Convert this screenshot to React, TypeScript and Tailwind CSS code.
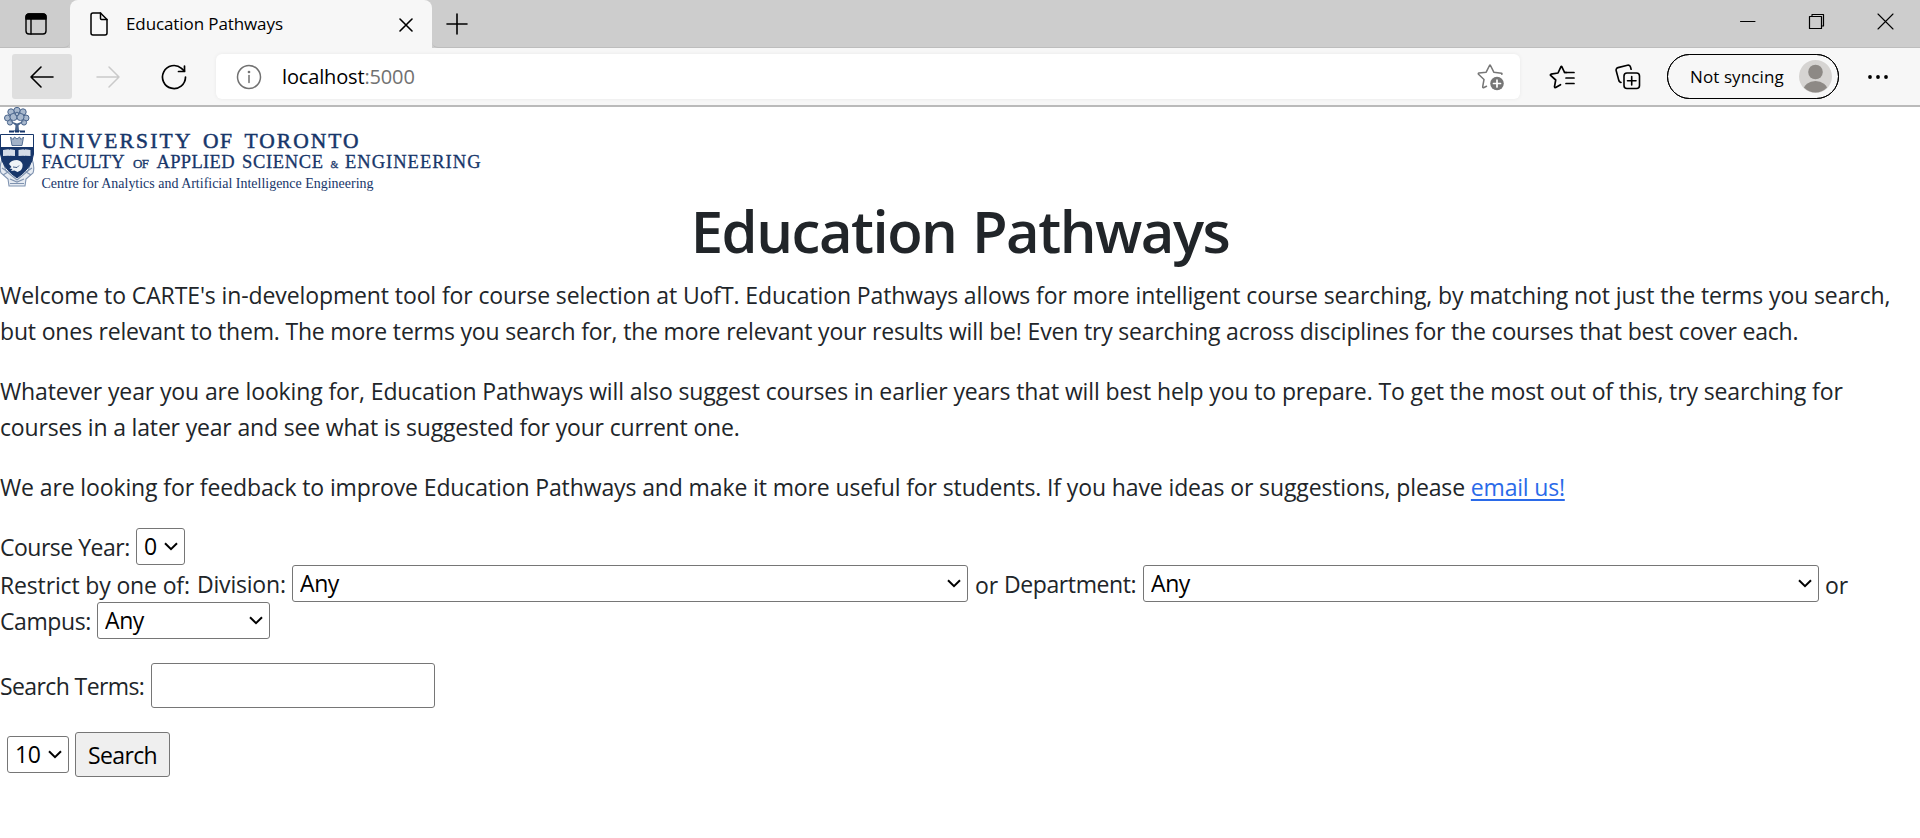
import React from "react";

const stroke = { fill: "none", stroke: "currentColor", strokeLinecap: "round", strokeLinejoin: "round" } as const;

function TabBar() {
  return (
    <div className="flex h-12 bg-[#cdcdcd] text-black">
      <div className="flex h-12 w-[70px] items-center rounded-br-md border-b border-[#bdbdbd] pl-[25px]">
        <svg width="22" height="22" viewBox="0 0 22 22" {...stroke} strokeWidth="1.4">
          <rect x="1" y="1" width="20" height="20" rx="3" />
          <path d="M1 6V4a3 3 0 0 1 3-3h14a3 3 0 0 1 3 3v2z" fill="currentColor" />
          <path d="M6 6v15" />
        </svg>
      </div>
      <div className="flex w-[362px] items-center rounded-t-lg bg-[#f7f7f7] pl-5">
        <svg width="18" height="24" viewBox="0 0 18 24" {...stroke} strokeWidth="1.5">
          <path d="M3 1h7.500L17 7.500V21a2 2 0 0 1-2 2H3a2 2 0 0 1-2-2V3a2 2 0 0 1 2-2z" />
          <path d="M10.500 1v5.500a1 1 0 0 0 1 1H17" />
        </svg>
        <span className="ml-[18px] w-[273px] text-[17px] leading-[48px] tracking-[-0.1px]">Education Pathways</span>
        <svg className="mt-0.5" width="14" height="14" viewBox="0 0 14 14" {...stroke} strokeWidth="1.6">
          <path d="M1 1l12 12M13 1L1 13" />
        </svg>
      </div>
      <div className="flex flex-1 items-center rounded-bl-md border-b border-[#bdbdbd] pr-[26px]">
        <svg className="ml-[14px]" width="22" height="22" viewBox="0 0 22 22" {...stroke} strokeWidth="1.6">
          <path d="M11 1v20M1 11h20" />
        </svg>
        <div className="mb-1 ml-auto flex items-center gap-[52px]">
          <svg width="17" height="17" viewBox="0 0 17 17" {...stroke} strokeWidth="1">
            <path d="M1.500 8.500h14.500" />
          </svg>
          <svg width="17" height="17" viewBox="0 0 17 17" {...stroke} strokeWidth="1.200">
            <path d="M1.500 3.500h12v12h-12zM4 3.500v-2h11.500V13h-2" />
          </svg>
          <svg width="17" height="17" viewBox="0 0 17 17" {...stroke} strokeWidth="1.100">
            <path d="M1 1l15 15M16 1L1 16" />
          </svg>
        </div>
      </div>
    </div>
  );
}

function Toolbar() {
  return (
    <div className="flex h-[59px] items-start border-b-2 border-[#bababa] bg-[#f7f7f7] pl-3 pt-1.5 text-black">
      <div className="flex h-[45px] w-[60px] items-center justify-center rounded-[3px] bg-[#dfdfdf]">
        <svg width="26" height="24" viewBox="0 0 26 24" {...stroke} strokeWidth="1.600">
          <path d="M12 2L2 12l10 10M2 12h22" />
        </svg>
      </div>
      <div className="flex h-[45px] w-[72px] items-center justify-center text-[#cacaca]">
        <svg width="26" height="24" viewBox="0 0 26 24" {...stroke} strokeWidth="1.500">
          <path d="M14 2l10 10l-10 10M24 12H2" />
        </svg>
      </div>
      <div className="flex h-[45px] w-[60px] items-center justify-center">
        <svg width="26" height="26" viewBox="0 0 26 26" {...stroke} strokeWidth="1.700">
          <path d="M24.500 13A11.500 11.500 0 1 1 20.500 4.300L23.400 7.200" />
          <path d="M23.500 2v5.500H17.500" />
        </svg>
      </div>
      <div className="ml-3 flex h-[45px] w-[1304px] items-center rounded-md bg-white pl-5 pr-4 shadow-[0_0_4px_rgba(0,0,0,0.06)]">
        <svg width="26" height="26" viewBox="0 0 26 26" {...stroke} strokeWidth="1.500" className="text-[#717171]">
          <circle cx="13" cy="13" r="11.500" />
          <path d="M13 11.500v7" />
          <circle cx="13" cy="8" r="0.600" fill="currentColor" />
        </svg>
        <span className="ml-[20px] text-[20px] leading-[44px] tracking-[-0.15px]">
          localhost<span className="text-[#717171]">:5000</span>
        </span>
        <svg className="ml-auto -mr-px text-[#767676]" width="28" height="28" viewBox="0 0 28 28" {...stroke} strokeWidth="1.500">
          <path d="M9.500 23.300L6.500 24.700q-1 .2-.8-1l1.300-7.200L1.500 11.300q-.7-.9.5-1.200l7.200-.9L12.500 2.500q.5-.9 1 0l3.300 6.700l7.700 1.100q.8.200.3 1" />
          <circle cx="20" cy="20.500" r="6.800" fill="currentColor" stroke="none" />
          <path d="M20 17v7M16.500 20.500h7" stroke="#fff" strokeWidth="1.700" />
        </svg>
      </div>
      <div className="flex h-[45px] items-center">
        <svg className="ml-[29px]" width="26" height="24" viewBox="0 0 26 24" {...stroke} strokeWidth="1.700">
          <path d="M17.500 7.500H15.600L12.900 1.800q-.5-.8-1 0L9 8L2 9.200q-1 .4-.4 1.200L6.700 15L5.500 21.700q.1 1.200 1.200.8L11.500 19.700" />
          <path d="M15.600 7.500H25M17 13h8M17 18.500h8" />
        </svg>
        <svg className="ml-[40px]" width="26" height="26" viewBox="0 0 26 26" {...stroke} strokeWidth="1.600">
          <rect x="9" y="9" width="15.500" height="15.500" rx="3" />
          <path d="M16.700 12.500v8.500M12.500 16.700H21" />
          <path d="M6 18.500L5 18a3 3 0 0 1-1.300-2L1.200 6.800a2.500 2.500 0 0 1 1.800-3.200L12.500 1.200a2.500 2.500 0 0 1 3 1.800l.6 2.300" />
        </svg>
        <div className="ml-[26px] flex h-[45px] w-[172px] items-center rounded-full border-[1.500px] border-black pl-[22px] outline-[0.500px] -outline-offset-1 outline-black">
          <span className="w-[109px] text-[17px] leading-[42px] tracking-[0.1px]">Not syncing</span>
          <svg width="33" height="33" viewBox="0 0 33 33">
            <clipPath id="avatar"><circle cx="16.500" cy="16.500" r="16" /></clipPath>
            <circle cx="16.500" cy="16.500" r="16.500" fill="#d6d4d2" />
            <circle cx="16.500" cy="12" r="7.300" fill="#8d8985" />
            <ellipse cx="16.500" cy="30" rx="12" ry="9" fill="#8d8985" clipPath="url(#avatar)" />
          </svg>
        </div>
        <svg className="ml-[29px]" width="20" height="6" viewBox="0 0 20 6">
          <circle cx="2" cy="3" r="1.900" />
          <circle cx="10" cy="3" r="1.900" />
          <circle cx="18" cy="3" r="1.900" />
        </svg>
      </div>
    </div>
  );
}

function Logo() {
  return (
    <svg className="block font-['Liberation_Serif',serif]" width="482" height="87" viewBox="0 0 482 87" fill="#17366a">
      <g stroke="#4a658c" strokeWidth="1" fill="#a9b9ce">
        <circle cx="17" cy="3.500" r="3.200" />
        <circle cx="11" cy="5" r="3.200" />
        <circle cx="23" cy="5" r="3.200" />
        <circle cx="7.500" cy="11" r="3" />
        <circle cx="26" cy="11" r="3" />
        <circle cx="13.500" cy="10" r="3.600" />
        <circle cx="20.500" cy="10" r="3.600" />
        <circle cx="10" cy="15.500" r="2.600" />
        <circle cx="24" cy="15.500" r="2.600" />
        <circle cx="17" cy="7" r="1.800" />
      </g>
      <path d="M10 14l5.500 4.500l-.5 4.500l-2.500 1.500h9l-2.500-1.500l-.5-4.500l5.500-4.500l-7 2.500z" fill="#4a658c" />
      <path d="M9 24.500h5M15 24.500h4M20 24.500h5" stroke="#17366a" strokeWidth="2.200" />
      <path d="M2 52Q-1 60 1 66L8 72L9 79H25L26 72L33 66Q35 60 32 52L28 64L17 73L6 64z" fill="#e6ebf2" stroke="#7f93b0" strokeWidth="1.100" />
      <path d="M2 61l6 4l-5 3M32 61l-6 4l5 3M10 72l7 3l7-3M10 76.500h14" fill="none" stroke="#7f93b0" strokeWidth="1.200" />
      <path d="M.5 27.500H33.500V47Q32 61 17 71Q2 61 .5 47z" fill="#fff" stroke="#17366a" />
      <path d="M.5 40H33.500V47Q32 61 17 71Q2 61 .5 47z" />
      <path d="M10.500 30l2.500 2.500l1.500-2.500l2.500 2l2.500-2l1.500 2.500l2.500-2.500l-1.500 8.500h-10z" fill="#a3b3c9" stroke="#4a658c" strokeWidth=".9" />
      <path d="M3 43l5.500-.8l.8.700l.7-.7l5 .8v6l-5-.3l-.7.400l-.8-.4l-5.500.3zM18.500 43l5-.8l.8.700l.7-.7l5.500.8v6l-5.500-.3l-.7.400l-.8-.4l-5 .3z" fill="#d5dde8" />
      <path d="M9 57q2-4 8-4q4 .5 5.500 4q.5 4-2 6.500l-3 1.500l-3-1.500l-3.500.5l1.500-2l-3-.5l2-1.500z" fill="#eef2f7" />
      <path d="M13 60l4 .5l2-2" fill="none" stroke="#17366a" strokeWidth=".8" />
      <g stroke="#17366a" strokeWidth=".5">
        <text x="41.500" y="41" fontSize="21.500" textLength="149">UNIVERSITY</text>
        <text x="203" y="41" fontSize="21.500" textLength="29">OF</text>
        <text x="244.500" y="41" fontSize="21.500" textLength="114">TORONTO</text>
      </g>
      <g stroke="#17366a" strokeWidth=".3">
        <text x="41.500" y="61" fontSize="18.500" textLength="83">FACULTY</text>
        <text x="133" y="61" fontSize="13" textLength="16">OF</text>
        <text x="156.500" y="61" fontSize="18.500" textLength="78">APPLIED</text>
        <text x="242" y="61" fontSize="18.500" textLength="81">SCIENCE</text>
        <text x="330.500" y="61" fontSize="10">&amp;</text>
        <text x="345" y="61" fontSize="18.500" textLength="135.500">ENGINEERING</text>
      </g>
      <text x="41.500" y="81" fontSize="15.500" textLength="332" lengthAdjust="spacingAndGlyphs">
        Centre for Analytics and Artificial Intelligence Engineering
      </text>
    </svg>
  );
}

function Select({ value, className }: { value: string; className: string }) {
  return (
    <span className={`relative block h-[37px] shrink-0 ${className}`}>
      <select className="block h-[37px] w-full appearance-none rounded-[3px] border border-[#767676] bg-white pl-[7px] text-[23px] leading-[35px] tracking-[-0.4px] text-black">
        <option>{value}</option>
      </select>
      <svg className="pointer-events-none absolute right-[7px] top-[14px]" width="14" height="9" viewBox="0 0 14 9" fill="none" stroke="#000" strokeWidth="2">
        <path d="M1 1.200l6 6l6-6" />
      </svg>
    </span>
  );
}

export default function App() {
  return (
    <div className="h-[838px] w-full overflow-hidden bg-white font-['Open_Sans',sans-serif]">
      <TabBar />
      <Toolbar />
      <main className="text-[23px] leading-9 text-[#212529]">
        <Logo />
        <h1 className="pt-px text-center text-[58px] font-semibold leading-[72px] tracking-[-1.5px] [word-spacing:2px]">Education Pathways</h1>
        <div className="mt-[10px] flex flex-col gap-6 whitespace-nowrap">
          <p>
            <span className="tracking-[-0.11px]">Welcome to CARTE's in-development tool for course selection at UofT. Education Pathways allows for more intelligent course searching, by matching not just the terms you search,</span>
            <br />
            <span className="tracking-[-0.18px]">but ones relevant to them. The more terms you search for, the more relevant your results will be! Even try searching across disciplines for the courses that best cover each.</span>
          </p>
          <p>
            <span className="tracking-[-0.12px]">Whatever year you are looking for, Education Pathways will also suggest courses in earlier years that will best help you to prepare. To get the most out of this, try searching for</span>
            <br />
            <span className="tracking-[-0.17px]">courses in a later year and see what is suggested for your current one.</span>
          </p>
          <p>
            <span className="tracking-[-0.12px]">We are looking for feedback to improve Education Pathways and make it more useful for students. If you have ideas or suggestions, please </span>
            <a href="#email" className="tracking-[-0.2px] text-[#2a6ae9] underline decoration-2 underline-offset-[3px]">email us!</a>
          </p>
        </div>
        <form className="mt-[23px] whitespace-nowrap">
          <div className="flex h-[37px]">
            <label className="w-[136px] pt-px tracking-[-0.5px]">Course Year:</label>
            <Select value="0" className="w-[49px]" />
          </div>
          <div className="flex h-[37px]">
            <span className="w-[197px] pt-0.5 tracking-[-0.15px]">Restrict by one of:</span>
            <label className="w-[95px] pt-px tracking-[-0.2px]">Division:</label>
            <Select value="Any" className="w-[676px]" />
            <span className="w-[36px] pl-[7px] pt-0.5">or</span>
            <label className="w-[139px] pt-px tracking-[-0.4px]">Department:</label>
            <Select value="Any" className="w-[676px]" />
            <span className="pl-1.5 pt-0.5">or</span>
          </div>
          <div className="flex h-[37px]">
            <label className="w-[97px] pt-px tracking-[-0.4px]">Campus:</label>
            <Select value="Any" className="w-[173px]" />
          </div>
          <div className="mt-6 flex h-[45px]">
            <label className="w-[151px] pt-[5px] tracking-[-0.6px]">Search Terms:</label>
            <input type="text" className="block h-[45px] w-[284px] rounded-[3px] border border-[#767676] bg-white" />
          </div>
          <div className="mt-6 flex h-[45px] items-center gap-1.5 pl-[7px]">
            <Select value="10" className="w-[62px]" />
            <button type="button" className="h-[45px] w-[95px] rounded-[3px] border border-[#767676] bg-[#efefef] text-[23px] leading-9 tracking-[-0.6px] text-black">Search</button>
          </div>
        </form>
      </main>
    </div>
  );
}
